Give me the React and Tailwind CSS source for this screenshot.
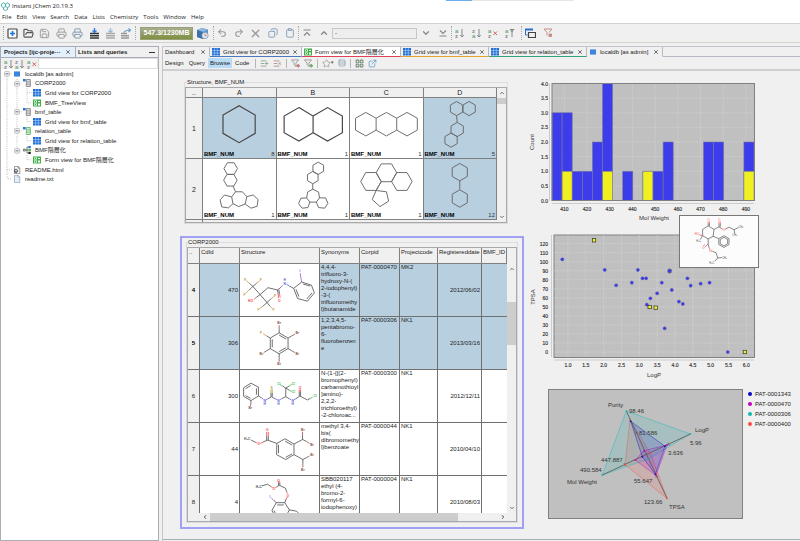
import React, { Component } from 'react';
import {
	SquarePlus, FolderOpen, Save, Printer, Undo2, Redo2, X, Copy, Clipboard, ChevronUp, ChevronDown,
	ChevronLeft, ChevronRight, Star, ListPlus, ListX, ExternalLink, LayoutGrid, Rows3
} from 'lucide-react';

const C = '#4a4a4a';
const RED = '#f04040';
const BLUE = '#5a5ae0';
const GOLD = '#c39a45';
const BROWN = '#8a4a4a';
const GREEN = '#35b94a';
const PURPLE = '#a050d0';

const ring = (cx, cy, r, turn = 30) => {
	let d = '';
	for (let i = 0; i < 6; i++) {
		const a = ((i * 60 + turn) * Math.PI) / 180;
		d += `${i ? 'L' : 'M'}${(cx + r * Math.cos(a)).toFixed(1)} ${(cy + r * Math.sin(a)).toFixed(1)}`;
	}
	return d + 'Z';
};

const scaffolds = [
	[
		{ count: 8, selected: true, bold: true, d: 'M109 21L159 50V107L109 136L59 107V50Z' },
		{ count: 1, bold: true, d: 'M65 27L109 53V105L65 131L19 105V53ZM109 53L154 27L200 53V105L154 131L109 105' },
		{
			count: 1,
			d: 'M46 42L78 60V97L46 115L14 97V60ZM78 60L110 42L142 60V97L110 115L78 97M142 60L174 42L206 60V97L174 115L142 97'
		},
		{ count: 5, selected: true, d: ring(98, 30, 22) + ring(137, 30, 22) + 'M98 52L100 73' + ring(100, 95, 22) + ring(81, 128, 22) }
	],
	[
		{
			count: 1,
			d:
				ring(83, 27, 21, 0) + ring(82, 63, 21, 0) +
				'M90 81L98 99L119 99L133 114L128 137L108 145L90 136L86 115L98 99' +
				'M86 115L64 109L50 124L55 146L76 149L90 136M133 114L153 109L168 123L165 144L146 150L128 137'
		},
		{
			count: 1,
			d:
				ring(125, 26, 19) + ring(108, 55, 19) +
				'M108 74V91L126 100L129 118L119 131H99L89 118L92 100L108 91' +
				'M89 118L71 119L64 136L75 150L93 148L99 131M129 118H148L155 135L145 150L126 148L119 131'
		},
		{
			count: 1,
			d: ring(110, 40, 32, 0) + ring(62, 67, 32, 0) + ring(158, 67, 32, 0) + 'M94 67L78 95L110 99L117 128L90 145L66 123L78 95'
		},
		{ count: 12, selected: true, d: ring(108, 38, 27) + 'M108 65V92' + ring(108, 120, 27) }
	]
];

const compounds = [
	{
		row: 4, id: 470, corpid: 'PAT-0000470', project: 'MK2', date: '2012/06/02', selected: true,
		synonyms: ['4,4,4-', 'trifluoro-3-', 'hydroxy-N-(', '2-iodophenyl)', '-3-(', 'trifluoromethy', 'l)butanamide'],
		bonds: [
			[C, 'M187 54L217 63L226 87L205 112L175 104L163 73ZM192 60L213 66M219 87L203 105M179 98L170 76M163 73L150 66M124 70L114 78L85 71L61 92L39 67M61 92L82 116M61 92L50 100M114 78L116 90M118 77L120 89M39 67L51 57M39 67L28 57M39 67L27 79M82 116L94 105M82 116L70 127M82 116L91 127'],
			[GOLD, 'M51 57L60 50M28 57L19 49M27 79L17 88M94 105L103 98M70 127L60 134M91 127L98 134'],
			[RED, 'M50 100L42 107M116 90L117 102M120 89L122 101'],
			[BLUE, 'M150 66L142 61M130 64L124 70'],
			[PURPLE, 'M187 54L183 27']
		],
		atoms: [
			['I', 182, 20, PURPLE], ['H', 136, 47, BLUE], ['N', 136, 59, BLUE], ['O', 119, 112, RED], ['HO', 32, 112, RED],
			['F', 16, 46, GOLD], ['F', 63, 46, GOLD], ['F', 14, 91, GOLD], ['F', 106, 94, GOLD], ['F', 56, 138, GOLD], ['F', 102, 138, GOLD]
		]
	},
	{
		row: 5, id: 306, corpid: 'PAT-0000306', project: 'NK1', date: '2013/03/16', selected: true,
		synonyms: ['1,2,3,4,5-', 'pentabromo-', '6-', 'fluorobenzen', 'e'],
		bonds: [
			[C, 'M119 47L146 63V95L119 111L92 95V63ZM119 54L140 66M140 92L119 104M98 91V67M119 47V36M146 63L156 57M146 95L156 101M119 111V123M92 95L82 101M92 63L82 57'],
			[BROWN, 'M119 36V24M156 57L167 51M156 101L167 107M119 123V135M82 101L72 107'],
			[GOLD, 'M82 57L70 50']
		],
		atoms: [
			['Br', 119, 17, BROWN], ['Br', 174, 48, BROWN], ['Br', 174, 111, BROWN], ['Br', 119, 142, BROWN],
			['Br', 65, 111, BROWN], ['F', 64, 47, GOLD]
		]
	},
	{
		row: 6, id: 300, corpid: 'PAT-0000300', project: 'NK1', date: '2012/12/11',
		synonyms: ['N-(1-{[(2-', 'bromophenyl)', 'carbamothioyl', ']amino}-', '2,2,2-', 'trichloroethyl)', '-2-chloroac...'],
		bonds: [
			[C, 'M11 53L33 39L56 51V78L33 92L11 79ZM17 56L33 46M50 55V74M32 85L17 77M56 78L66 84M84 87L96 80M96 80L106 86M94 80V68M98 80V68M127 86L139 80V54M139 80L149 86M139 54L130 48M139 54L149 48M139 54L149 60M170 86L182 78M180 78V66M184 78V66M182 78L205 90L214 85M33 92V100'],
			[BROWN, 'M33 100L32 108'],
			[BLUE, 'M66 84L71 88M79 90L84 87M106 86L112 89M122 89L127 86M149 86L155 89M164 89L170 86'],
			['#a3a335', 'M94 68V58M98 68V58'],
			[RED, 'M180 66V58M184 66V58'],
			[GREEN, 'M130 48L122 44M149 48L157 43M149 60L157 64M214 85L221 81']
		],
		atoms: [
			['Br', 31, 115, BROWN], ['N', 75, 92, BLUE], ['H', 75, 101, BLUE], ['S', 96, 52, '#a3a335'], ['N', 117, 92, BLUE],
			['H', 117, 101, BLUE], ['N', 160, 92, BLUE], ['H', 160, 101, BLUE], ['Cl', 118, 41, GREEN], ['Cl', 162, 41, GREEN],
			['Cl', 162, 66, GREEN], ['O', 182, 53, RED], ['Cl', 228, 78, GREEN]
		]
	},
	{
		row: 7, id: 44, corpid: 'PAT-0000044', project: 'NK1', date: '2010/04/10',
		synonyms: ['methyl 3,4-', 'bis(', 'dibromomethy', 'l)benzoate'],
		bonds: [
			[C, 'M112 61L137 47L164 63V95L139 110L111 95ZM137 54L158 66M158 93L139 103M117 91V65M112 61L83 51L70 57M81 51V38M86 51V38M34 51L48 58M164 63L190 49V36M190 49L202 55M164 95L191 110V123M191 110L203 104'],
			[RED, 'M70 57L62 61M81 38V26M86 38V26M48 58L52 60'],
			[BROWN, 'M190 36V26M202 55L211 61M191 123V134M203 104L211 99']
		],
		atoms: [
			['H₃C', 22, 48, C], ['O', 57, 63, RED], ['O', 83, 18, RED], ['Br', 191, 18, BROWN], ['Br', 219, 64, BROWN],
			['Br', 219, 96, BROWN], ['Br', 191, 142, BROWN]
		]
	},
	{
		row: 8, id: 4, corpid: 'PAT-0000004', project: 'NK1', date: '2010/08/03',
		synonyms: ['SBB020117', 'ethyl (4-', 'bromo-2-', 'formyl-6-', 'iodophenoxy)'],
		bonds: [
			[C, 'M67 29L84 24L94 31M110 33L119 27L138 36L142 47M117 27V20M121 27V20M140 69L136 80L110 80L97 104L110 128H136L150 102L136 80M133 87H113M103 104L113 122M150 102L172 106L178 112M110 80L101 71'],
			[RED, 'M94 31L99 34M107 35L110 33M117 20L116 16M121 20L120 16M142 47L144 52M144 63L140 69'],
			[PURPLE, 'M101 71L95 66']
		],
		atoms: [['H₃C', 57, 30, C], ['O', 103, 38, RED], ['O', 117, 12, RED], ['O', 145, 58, RED], ['I', 91, 63, PURPLE]]
	}
];

const hoverMolecule = {
	bonds: [
		[C, 'M86 30L104 41L101 62L86 70L69 60V41ZM101 62L118 69M104 41L119 33L128 39M119 33V24M123 33V24M86 30V22M90 30V22M140 39L150 34L165 42L178 35M165 42L167 53M69 60L63 70M86 70V86L80 91M86 86L89 97M110 112L115 128L128 127M115 128L106 138M100 108L110 112'],
		[C, ring(134, 78, 18) + ring(134, 78, 13)],
		[RED, 'M119 24V17M123 24V17M86 22V17M90 22V17M128 39L131 41M137 41L140 39M69 60L58 57M80 91L75 95M76 87L71 91M89 97L91 102M94 106L100 108']
	],
	atoms: [
		['O', 87, 12, RED], ['O', 120, 12, RED], ['O', 134, 43, RED], ['HO', 51, 54, RED], ['CH₃', 186, 32, C], ['CH₃', 167, 58, C],
		['H₃C', 57, 75, C], ['O', 71, 97, RED], ['O', 92, 106, RED], ['CH₃', 136, 126, C], ['H₃C', 97, 142, C]
	]
};

function Molecule({ bonds, atoms, viewBox, className, small }) {
	return (
		<svg className={className} viewBox={viewBox} fill="none" strokeWidth={small ? 2 : 2.4}>
			{bonds.map(([color, d], i) => <path key={i} d={d} stroke={color} />)}
			{atoms.map(([label, x, y, color], i) => (
				<text
					key={i} x={x} y={y + 4} fontSize={small ? 8 : 10} fontWeight={small ? 'normal' : 'bold'}
					textAnchor="middle" fill={color}
				>
					{label}
				</text>
			))}
		</svg>
	);
}

const GridIcon = () => (
	<svg className="h-2 w-2 shrink-0" viewBox="0 0 8 8">
		<path fill="#1f6fd6" d="M0 0h8v7.5H0z" />
		<path stroke="#cfe2fa" strokeWidth=".5" d="M2.6 0v8M5.3 0v8M0 2.5h8M0 5h8" />
	</svg>
);
const FormIcon = () => (
	<svg className="h-2 w-2 shrink-0" viewBox="0 0 8 8">
		<path fill="#3fae49" d="M0 .5h8v7H0z" />
		<path fill="#fff" d="M1 1.5h3v2H1zM1 4.5h3v2H1zM5 2h2v1H5zM5 4.5h2v2H5z" />
		<path fill="#3fae49" d="M1.7 2h1.5v1H1.7zM1.7 5h1.5v1H1.7z" />
	</svg>
);
const DbIcon = () => (
	<svg className="h-2 w-2 shrink-0" viewBox="0 0 8 8">
		<path fill="#1f73d8" d="M1 1.5h6v5H1z" />
		<path stroke="#8fc0f5" strokeWidth=".5" d="M1 3h6M1 5h6" />
	</svg>
);
const TableIcon = ({ color }) => (
	<svg className="h-2 w-2 shrink-0" viewBox="0 0 8 8" fill="none">
		<path fill="#1f73d8" d="M0 0h2.6v2.4H0z" />
		<path stroke={color} strokeWidth=".8" d="M3.3.5h4v7h-4zM3.3 2.2h4M3.3 4h4M3.3 5.8h4" />
	</svg>
);
const TreeIcon = () => (
	<svg className="h-2 w-2 shrink-0" viewBox="0 0 8 8" fill="none">
		<path stroke="#444" strokeWidth=".7" d="M2 4h3M4 1v6M4 1h1.5M4 7h1.5M.4 3h1.7v2H.4z" />
		<path fill="#1f73d8" d="M5.4 0h2.4v2.2H5.4z" />
		<path fill="#3fae49" d="M5.4 2.9h2.4v2.2H5.4z" />
		<path fill="#222" d="M5.4 5.8h2.4V8H5.4z" />
	</svg>
);
const PageIcon = ({ web }) => (
	<svg className="h-2 w-2 shrink-0" viewBox="0 0 8 8" fill="none" strokeWidth=".6">
		<path stroke={web ? '#555' : '#7f93b5'} fill={web ? '#fff' : '#e3edf8'} d="M1.5.4h3.7l1.6 1.7v5.5H1.5zM5 .4v1.8h1.8" />
		{web && <path stroke="#333" fill="#fff" strokeWidth=".8" d="M3 3.2a1.7 1.7 0 1 0 .1 0M1.3 5.2h3.4" />}
	</svg>
);

const icons = { grid: GridIcon, form: FormIcon, db: DbIcon };

const Sort = ({ top = 'a', bottom = 'z', mark = 'arrow' }) => (
	<svg className="h-[10px] w-[10px]" viewBox="0 0 10 10" fill="none">
		<text x="0" y="4.5" fontSize="6" fontWeight="bold" fill={top === 'a' ? '#6fa877' : '#888'}>{top}</text>
		<text x="0" y="9.5" fontSize="6" fontWeight="bold" fill={bottom === 'a' ? '#6fa877' : '#888'}>{bottom}</text>
		{mark === 'arrow' && <path stroke="#888" d="M7 1v8M5.2 7L7 9l1.800-2" />}
		{mark === 'x' && <path stroke="#c66" d="M5.500 3.500l3.500 3.500M9 3.500L5.500 7" />}
		{mark === 'filter' && <path stroke="#888" d="M4.800 1.500h4.500M7 2v7M5.500 1.500L7 4l1.500-2.500" />}
	</svg>
);

const FilterMark = ({ color, mark }) => (
	<svg className="h-[9px] w-[9px]" viewBox="0 0 10 10" fill="none">
		<path stroke={color} d="M.5 1h8L5.500 4.500V8.500L3.500 6.500v-2z" />
		<path stroke={mark} strokeWidth="1.600" d="M6 7.500h4M8 5.500v4" />
	</svg>
);

const Stack = ({ kind }) => (
	<svg className="h-[11px] w-[11px]" viewBox="0 0 11 11" fill="none">
		{kind === 'share' ? (
			<g>
				<path stroke="#999" strokeWidth="1.500" d="M0 5.500h6M0 7.700h8M0 10h8" />
				<path stroke="#6e9cc4" strokeWidth="1.200" d="M3 4.500C4 2.500 6 2 9 2M7.500.500L9.500 2 7.500 4" />
			</g>
		) : (
			<g>
				<path stroke={kind === 'down' ? '#333' : '#aaa'} strokeWidth="1.500" d="M1 5.500h9M1 7.700h9M1 10h9" />
				<path stroke={kind === 'down' ? '#2b78d8' : '#9bbbd8'} strokeWidth="1.300" d="M5.500 0v4M3.500 2.500l2 2 2-2" />
			</g>
		)}
	</svg>
);

const Grip = () => <span className="h-3.5 w-px border-l border-dotted border-[#aaa]" />;
const Rule = () => <span className="h-[9px] w-px bg-[#b5b5b5]" />;

const IconButton = ({ label, children }) => (
	<button type="button" aria-label={label} className="flex h-3.5 items-center justify-center text-[#999]">{children}</button>
);

// guides: one letter per indent step - v line, t tee, l elbow, x expander, e last expander, r root expander
const tree = [
	{ guides: 'r', icon: <DbIcon />, label: 'localdb [as admin]' },
	{ guides: 'vx', icon: <TableIcon color="#777" />, label: 'CORP2000' },
	{ guides: 'vvt', icon: <GridIcon />, label: 'Grid view for CORP2000' },
	{ guides: 'vvl', icon: <FormIcon />, label: 'BMF_TreeView' },
	{ guides: 'vx', icon: <TableIcon color="#777" />, label: 'bmf_table' },
	{ guides: 'vvl', icon: <GridIcon />, label: 'Grid view for bmf_table' },
	{ guides: 'vx', icon: <TableIcon color="#4fae58" />, label: 'relation_table' },
	{ guides: 'vvl', icon: <GridIcon />, label: 'Grid view for relation_table' },
	{ guides: 've', icon: <TreeIcon />, label: 'BMF階層化' },
	{ guides: 'v l', icon: <FormIcon />, label: 'Form view for BMF階層化' },
	{ guides: 't', icon: <PageIcon web />, label: 'README.html' },
	{ guides: 'l', icon: <PageIcon />, label: 'readme.txt' }
];

const guidePaths = {
	v: 'M5 0V10', t: 'M5 0V10M5 5H10', l: 'M5 0V5H10', x: 'M5 0V10M5 5H10', e: 'M5 0V5H10', r: 'M5 5V10M5 5H10', ' ': ''
};

const Guide = ({ type }) => (
	<svg className="h-full w-[10px] shrink-0" viewBox="0 0 10 10" fill="none">
		<path d={guidePaths[type]} stroke="#aaa" strokeWidth=".7" strokeDasharray="1 1" />
		{'xer'.includes(type) && (
			<g>
				<rect x="2.5" y="2.5" width="5" height="5" rx=".8" fill="#f4f4f4" stroke="#999" strokeWidth=".6" />
				<path d="M3.500 5h3" stroke="#446" strokeWidth=".8" />
			</g>
		)}
	</svg>
);

const tabs = [
	{ label: 'Dashboard', width: 'w-[47px]', line: 'border-b-transparent' },
	{ label: 'Grid view for CORP2000', icon: 'grid', width: 'w-[92px]', line: 'border-b-[#4a78c0]' },
	{ label: 'Form view for BMF階層化', icon: 'form', width: 'w-[99px]', line: 'border-b-[#e0405a]', active: true },
	{ label: 'Grid view for bmf_table', icon: 'grid', width: 'w-[88px]', line: 'border-b-[#e5a52e]' },
	{ label: 'Grid view for relation_table', icon: 'grid', width: 'w-[98px]', line: 'border-b-[#35a080]' },
	{ label: 'localdb [as admin]', icon: 'db', width: 'w-[76px]', line: 'border-b-transparent' }
];

function Header() {
	return (
		<header className="relative bg-white [font-family:'Open_Sans','Noto_Sans',sans-serif]">
			<div className="absolute inset-x-0 top-0 flex justify-center pl-[220px]">
				<span className="h-px w-[26px] bg-[#6ab0f0]" />
				<span className="h-px w-[102px] bg-[#e6e6e6]" />
			</div>
			<div className="flex h-3 items-center gap-[2px] pl-px">
				<svg className="h-[9px] w-[9px]" viewBox="0 0 9 9" fill="none" stroke="#3aa9a4" strokeWidth=".9">
					<path d="M2.500.8L4.500 2v2.500L2.500 5.700.6 4.500V2zM4.500 2L6.500.8 8.400 2v2.500L6.500 5.700M4.500 4.500L6.500 5.700V7.500L4.500 8.500 2.500 7.500V5.700" />
				</svg>
				<h1 className="text-[6px]">Instant JChem 20.19.3</h1>
			</div>
			<nav className="flex h-[11px] items-center gap-[5px] pl-[2px] text-[6px]">
				{['File', 'Edit', 'View', 'Search', 'Data', 'Lists', 'Chemistry', 'Tools', 'Window', 'Help'].map((item) => (
					<button key={item} type="button">{item}</button>
				))}
			</nav>
		</header>
	);
}

function Toolbar() {
	return (
		<div className="flex h-5 items-center border-y border-[#d2d2d2] pl-[3px]">
			<Grip />
			<div className="grid w-[131px] grid-cols-8">
				<IconButton label="New">
					<svg className="h-[11px] w-[11px]" viewBox="0 0 11 11" fill="none">
						<rect x="1" y="1" width="9" height="9" rx=".8" fill="#fff" stroke="#444" strokeWidth="1.200" />
						<path stroke="#1f73d8" strokeWidth="1.700" d="M5.500 3v5M3 5.500h5" />
					</svg>
				</IconButton>
				<IconButton label="Open"><FolderOpen className="h-[11px] w-[11px] text-[#555]" strokeWidth={2.5} /></IconButton>
				<IconButton label="Save"><Save className="h-[11px] w-[11px]" /></IconButton>
				<IconButton label="Print"><Printer className="h-[11px] w-[11px]" /></IconButton>
				<IconButton label="Print preview"><Printer className="h-[11px] w-[11px] text-[#7c97ad]" /></IconButton>
				<IconButton label="Import"><Stack kind="down" /></IconButton>
				<IconButton label="Export"><Stack kind="up" /></IconButton>
				<IconButton label="Share"><Stack kind="share" /></IconButton>
			</div>
			<Grip />
			<div className="ml-1 flex h-[13px] w-[53px] items-center justify-center border border-[#9aa07a] bg-linear-to-b from-[#a9ad8c] via-[#8f9a66] to-[#7f9140] text-[7px] font-bold text-white">
				547.3/1230MB
			</div>
			<button type="button" aria-label="Database" className="ml-[3px]">
				<svg className="h-[13px] w-[13px]" viewBox="0 0 13 13">
					<path fill="#5b93c8" d="M1 3l5-2 6 1.500v7L7 12 1 10z" />
					<path fill="#8bb9e2" d="M1 3l5-2 6 1.500L7 5z" />
					<path fill="#3c72a8" d="M1 3l6 2v7l-6-2z" />
					<circle cx="9" cy="8.500" r="3.200" fill="#dce9f5" stroke="#7b8fa5" strokeWidth=".7" />
					<path d="M9 6.800v1.900h1.600" stroke="#c55" fill="none" strokeWidth=".7" />
				</svg>
			</button>
			<span className="w-1" />
			<Grip />
			<div className="grid w-[84px] grid-cols-5">
				<IconButton label="Undo"><Undo2 className="h-[10px] w-[10px]" strokeWidth={2.5} /></IconButton>
				<IconButton label="Redo"><Redo2 className="h-[10px] w-[10px]" strokeWidth={2.5} /></IconButton>
				<IconButton label="Cut"><X className="h-[13px] w-[13px]" strokeWidth={2.5} /></IconButton>
				<IconButton label="Copy"><Copy className="h-[10px] w-[10px] -scale-x-100 text-[#7695b5]" /></IconButton>
				<IconButton label="Paste"><Clipboard className="h-[10px] w-[10px] text-[#7695b5]" /></IconButton>
			</div>
			<Grip />
			<div className="grid w-[33px] grid-cols-2">
				<IconButton label="First">
					<svg className="h-[8px] w-[8px]" viewBox="0 0 8 8" fill="none" stroke="#888" strokeWidth="1.200"><path d="M.5 1h7M1 6.500l3-3 3 3" /></svg>
				</IconButton>
				<IconButton label="Previous"><ChevronUp className="h-[10px] w-[10px] text-[#888]" strokeWidth={3} /></IconButton>
			</div>
			<input aria-label="Record" defaultValue="-" className="h-[11px] w-[85px] border border-[#c8c8c8] bg-[#eee] px-[2px] text-[6px] outline-none" />
			<div className="grid w-[34px] grid-cols-2">
				<IconButton label="Next"><ChevronDown className="h-[10px] w-[10px] text-[#888]" strokeWidth={3} /></IconButton>
				<IconButton label="Last">
					<svg className="h-[8px] w-[8px]" viewBox="0 0 8 8" fill="none" stroke="#888" strokeWidth="1.200"><path d="M.5 7h7M1 1.500l3 3 3-3" /></svg>
				</IconButton>
			</div>
			<Grip />
			<div className="grid w-[66px] grid-cols-4">
				<IconButton label="Sort ascending"><Sort /></IconButton>
				<IconButton label="Sort descending"><Sort top="z" bottom="a" /></IconButton>
				<IconButton label="Clear sort"><Sort mark="x" /></IconButton>
				<IconButton label="Sort options"><Sort mark="filter" /></IconButton>
			</div>
			<span className="w-[3px]" />
			<Grip />
			<div className="grid w-[34px] grid-cols-2">
				<IconButton label="Windows">
					<svg className="h-[11px] w-[11px]" viewBox="0 0 11 11" fill="none">
						<path stroke="#2472cc" strokeWidth="2" d="M0 1.500h8" />
						<path stroke="#2472cc" d="M.5 1v6h2" />
						<path stroke="#444" fill="#f0f0f0" strokeWidth="1.200" d="M3.500 4.500h7v5h-7z" />
					</svg>
				</IconButton>
				<IconButton label="Clear filter">
					<svg className="h-[10px] w-[10px]" viewBox="0 0 10 10" fill="none" stroke="#c48f8a">
						<path d="M1 1h8L6 4.500M1 1l3 3.500v3" />
						<path fill="#c48f8a" d="M6 6h2.500v2.500H6z" />
					</svg>
				</IconButton>
			</div>
		</div>
	);
}

function ProjectPanel() {
	return (
		<aside className="flex w-[159px] shrink-0 flex-col border border-[#a9adb8] bg-white">
			<div className="flex h-[11px] items-center border-b border-[#a9adb8] bg-[#f0f0f0] text-[6px] font-bold whitespace-nowrap">
				<button type="button" className="flex h-full w-[74px] items-center justify-between bg-[#e4f0fb] pr-[4px] pl-[3px]">
					Projects [ijc-proje···
					<X className="h-[6px] w-[6px] text-[#444]" strokeWidth={3} />
				</button>
				<button type="button" className="h-full flex-1 border-l border-[#a9adb8] pl-[2px] text-left">Lists and queries</button>
				<button type="button" aria-label="Minimize" className="mr-[3px] h-px w-[6px] bg-[#333]" />
			</div>
			<div className="flex h-[11px] items-center bg-[#f0f0f0] pl-[3px]">
				<div className="grid w-[34px] shrink-0 grid-cols-3">
					<button type="button" aria-label="Sort A to Z"><Sort /></button>
					<button type="button" aria-label="Sort Z to A"><Sort top="z" bottom="a" /></button>
					<button type="button" aria-label="No sorting"><Sort mark="x" /></button>
				</div>
				<input aria-label="Filter projects" className="h-full min-w-0 flex-1 border border-[#ddd] bg-white px-1 text-[6px] outline-none" />
			</div>
			<ul className="grid h-[115px] grid-rows-12 pl-px text-[6px] leading-none">
				{tree.map(({ guides, icon, label }) => (
					<li key={label} className="flex min-h-0 items-center whitespace-nowrap">
						{guides.split('').map((type, i) => <Guide key={i} type={type} />)}
						<span className="mr-[4px] ml-px">{icon}</span>
						{label}
					</li>
				))}
			</ul>
		</aside>
	);
}

function ScrollBar({ thumb }) {
	return (
		<div className="flex w-[9px] shrink-0 flex-col items-center justify-between bg-[#f0f0f0] py-[2px]">
			<ChevronUp className="h-[6px] w-[6px] text-[#444]" strokeWidth={3} />
			<div className="flex w-full flex-1 flex-col">{thumb}</div>
			<ChevronDown className="h-[6px] w-[6px] text-[#444]" strokeWidth={3} />
		</div>
	);
}

const head = 'border-r border-b border-[#808080] bg-[#f0f0f0] font-normal';

function ScaffoldTable() {
	return (
		<fieldset className="mr-[16px] ml-[4px] min-w-0 border border-[#dcdcdc]">
			<legend className="ml-[2px] h-2 text-[6px] leading-[8px]">Structure, BMF_NUM</legend>
			<div className="mt-px flex h-[136px] overflow-hidden border border-[#a8a8a8] bg-white">
				<table className="h-min w-full table-fixed border-separate border-spacing-0 text-[7px] leading-[7px]">
					<colgroup><col className="w-[17px]" /><col /><col /><col /><col /></colgroup>
					<thead>
						<tr className="h-[10px]">
							<th className={head}>..</th>
							{['A', 'B', 'C', 'D'].map((name) => <th key={name} className={head}>{name}</th>)}
						</tr>
					</thead>
					<tbody>
						{scaffolds.map((row, i) => (
							<tr key={i}>
								<th className={head}>{i + 1}</th>
								{row.map(({ d, count, selected, bold }, j) => (
									<td key={j} className={`border-r border-b border-[#808080] px-px ${selected ? 'bg-[#b8cfe0]' : 'bg-white'}`}>
										<svg className="h-[53px] w-full" viewBox="0 0 219 159" fill="none" stroke={bold ? '#444' : '#6a6a6a'} strokeWidth={bold ? 3.6 : 3}>
											<path d={d} />
										</svg>
										<div className="flex justify-between text-[6px]">
											<b className="text-black">BMF_NUM</b>
											<span className="text-[#333]">{count}</span>
										</div>
									</td>
								))}
							</tr>
						))}
						<tr className="h-[4px]">
							<th className={head} />
							<td colSpan={4} className="bg-[#f0f0f0]" />
						</tr>
					</tbody>
				</table>
				<ScrollBar thumb={<span className="mt-[2px] h-[6px] w-full bg-[#cdcdcd]" />} />
			</div>
		</fieldset>
	);
}

function CompoundTable() {
	const cell = 'border-r border-b border-[#707070] px-px align-top overflow-hidden';
	return (
		<div className="mt-[12px] border-2 border-[#a0a0f4] px-[4px] pb-[4px]">
			<fieldset className="min-w-0 border border-[#dcdcdc]">
				<legend className="ml-px h-2 text-[6px] leading-[8px]">CORP2000</legend>
				<div className="mt-px border border-[#a8a8a8] bg-white">
					<div className="flex h-[265px] overflow-hidden">
						<table className="h-min w-full table-fixed border-separate border-spacing-0 text-[6px] leading-[7px]">
							<colgroup>
								<col className="w-[12px]" /><col className="w-[40px]" /><col className="w-[80px]" /><col className="w-[40px]" />
								<col className="w-[40px]" /><col className="w-[38px]" /><col className="w-[44px]" /><col />
							</colgroup>
							<thead>
								<tr className="h-[16px] text-left align-top">
									{['..', 'CdId', 'Structure', 'Synonyms', 'Corpid', 'Projectcode', 'Registereddate', 'BMF_ID'].map((name) => (
										<th key={name} className={`${head} px-px pt-px whitespace-nowrap`}>{name}</th>
									))}
								</tr>
							</thead>
							<tbody>
								{compounds.map((item) => (
									<tr key={item.row} className={`h-[53px] ${item.selected ? 'bg-[#b8cfe0]' : 'bg-white'}`}>
										<th className={`border-r border-b border-[#707070] bg-[#f0f0f0] ${item.selected ? 'font-bold text-black' : 'font-normal'}`}>{item.row}</th>
										<td className="border-r border-b border-[#707070] px-px text-right">{item.id}</td>
										<td className="border-r border-b border-[#707070] bg-white">
											<Molecule bonds={item.bonds} atoms={item.atoms} viewBox="0 0 240 156" className="h-[52px] w-full" />
										</td>
										<td className={`${cell} whitespace-nowrap`}>
											{item.synonyms.map((line) => <div key={line}>{line}</div>)}
										</td>
										<td className={`${cell} whitespace-nowrap`}>{item.corpid}</td>
										<td className={cell}>{item.project}</td>
										<td className="border-r border-b border-[#707070] px-px text-right">{item.date}</td>
										<td className="border-b border-[#707070]" />
									</tr>
								))}
							</tbody>
						</table>
						<div className="flex bg-[#f0f0f0] pt-[16px]">
							<ScrollBar thumb={<span className="mt-[30px] h-[43px] w-full bg-[#cdcdcd]" />} />
						</div>
					</div>
					<div className="flex h-[8px] items-center bg-[#f0f0f0] pr-[10px] pl-[14px]">
						<ChevronLeft className="h-[6px] w-[6px]" strokeWidth={3} />
						<span className="flex h-full flex-1 px-[2px]"><span className="h-full w-[86%] bg-[#cdcdcd]" /></span>
						<ChevronRight className="h-[6px] w-[6px]" strokeWidth={3} />
					</div>
				</div>
			</fieldset>
		</div>
	);
}

// [bar height, part of it that is selected]
const bins = [
	[3, 0], [3, 1], [1, 0], [1, 0], [2, 0], [4, 1], [0, 0], [1, 0], [0, 0], [1, 1],
	[1, 0], [2, 0], [0, 0], [0, 0], [0, 0], [2, 0], [2, 0], [0, 0], [0, 0], [2, 1]
];

function Histogram() {
	const bw = 202 / 20;
	const y = (v) => 125.5 - v * 29.25;
	const x = (v) => 40.3 + (v - 410) * 2.27;
	const counts = [0, 0.5, 1, 1.5, 2, 2.5, 3, 3.5, 4];
	const weights = [410, 420, 430, 440, 450, 460, 470, 480, 490];
	return (
		<svg className="block w-full" viewBox="0 0 276 150" role="img" aria-label="Count by Mol Weight" fill="#333">
			<rect x="28" y="8.5" width="202.5" height="117" fill="#c0c0c0" />
			<path
				d={counts.map((v) => `M28 ${y(v)}H230`).join('') + weights.map((v) => `M${x(v)} 8.5V125.5`).join('')}
				stroke="#d4d4d4" strokeWidth=".6" strokeDasharray="2 1"
			/>
			{bins.map(([total, picked], i) => (
				<g key={i} stroke="#7777a0" strokeWidth=".6">
					{total > 0 && <rect x={28 + i * bw} y={y(total)} width={bw} height={total * 29.25} fill="#3c3cea" />}
					{picked > 0 && <rect x={28 + i * bw} y={y(picked)} width={bw} height={picked * 29.25} fill="#f0f020" />}
				</g>
			))}
			<rect x="28" y="8.5" width="202.5" height="117" fill="none" stroke="#808080" />
			<path d="M25.5 8.500V125.500M28 128.500H230" stroke="#bbb" strokeWidth=".7" />
			<g fontSize="5" stroke="#333" strokeWidth=".15">
				{counts.map((v) => <text key={v} x="24" y={y(v) + 2} textAnchor="end">{v.toFixed(1)}</text>)}
				{weights.map((v) => <text key={v} x={x(v)} y="136" textAnchor="middle">{v}</text>)}
			</g>
			<text x="130" y="145" fontSize="6" textAnchor="middle">Mol Weight</text>
			<text transform="translate(10 67) rotate(-90)" fontSize="6" textAnchor="middle">Count</text>
		</svg>
	);
}

const points = [
	[0.84, 102.6], [2.03, 90.9], [2.96, 90.9], [2.35, 73.9], [2.79, 76.8], [3.09, 81.6], [3.19, 81.6], [3.63, 76.8],
	[4.35, 81.6], [4.44, 73.5], [4.72, 75.7], [4.97, 76.8], [3.91, 68.7], [3.5, 65], [3.31, 59.4], [4.11, 55.8],
	[4.22, 53.2], [3.21, 52.4], [3.71, 26.2], [5.48, 0]
];
const pickedPoints = [[1.73, 123.7], [3.29, 49.8], [3.46, 49.1], [5.96, 0]];

function ScatterPlot() {
	const x = (v) => 44 + (v - 1) * 35.66;
	const y = (v) => 127 - v * 0.903;
	const logp = [1, 1.5, 2, 2.5, 3, 3.5, 4, 4.5, 5, 5.5, 6];
	const tpsa = [0, 10, 20, 30, 40, 50, 60, 70, 80, 90, 100, 110, 120];
	return (
		<div className="relative">
			<svg className="block w-full" viewBox="0 0 276 155" role="img" aria-label="TPSA by LogP" fill="#333">
				<rect x="30" y="10" width="200.500" height="122.500" fill="#c0c0c0" stroke="#808080" />
				<path
					d={tpsa.map((v) => `M30 ${y(v)}H230`).join('') + logp.map((v) => `M${x(v)} 10V132`).join('')}
					stroke="#d4d4d4" strokeWidth=".6" strokeDasharray="2 1"
				/>
				{points.map(([a, b]) => <circle key={`${a} ${b}`} cx={x(a)} cy={y(b)} r="1.600" fill="#3c3cea" stroke="#5555a0" strokeWidth=".4" />)}
				<circle cx={x(3.85)} cy={y(89.7)} r="2.200" fill="#3c3cea" stroke="#8a8a50" strokeWidth=".6" />
				{pickedPoints.map(([a, b]) => (
					<rect key={a} x={x(a) - 1.7} y={y(b) - 1.7} width="3.400" height="3.400" fill="#f0f020" stroke="#333" strokeWidth=".7" />
				))}
				<path d="M27.500 10V132M30 135H230" stroke="#bbb" strokeWidth=".7" />
				<g fontSize="5" stroke="#333" strokeWidth=".15">
					{tpsa.map((v) => <text key={v} x="24" y={y(v) + 2} textAnchor="end">{v}</text>)}
					{logp.map((v) => <text key={v} x={x(v)} y="142" textAnchor="middle">{v.toFixed(1)}</text>)}
				</g>
				<text x="130" y="152" fontSize="6" textAnchor="middle">LogP</text>
				<text transform="translate(11 72) rotate(-90)" fontSize="6" textAnchor="middle">TPSA</text>
			</svg>
			<div className="absolute -top-[10px] left-[56%] w-[80px] border border-[#777] bg-[#fcfcfc]">
				<Molecule {...hoverMolecule} small viewBox="0 0 238 155" className="block w-full" />
			</div>
		</div>
	);
}

const radarLabels = [
	['Purity', 59, 17], ['98.46', 80, 23], ['81.586', 90, 45], ['LogP', 146, 42], ['5.96', 141, 55], ['3.636', 119, 65],
	['447.887', 52, 72], ['490.584', 31, 82], ['Mol Weight', 18, 94], ['55.647', 85, 93], ['123.66', 95, 114], ['TPSA', 120, 119]
];

const series = [
	{ label: 'PAT-0001343', color: '#0a0ac8', points: '81.7,31.3 116,56.3 106.300,84.300 93.300,66.700' },
	{ label: 'PAT-0000470', color: '#c000c0', points: '95,60.7 118,55 107,85.300 86.300,70' },
	{ label: 'PAT-0000306', color: '#10b8b8', points: '77.3,21 141.300,44 99.300,69 53.300,85' },
	{ label: 'PAT-0000400', color: '#ff4a40', points: '81,29.700 101.300,63 118,108.300 76,74.700' }
];

function RadarChart() {
	return (
		<div className="flex pl-[24px]">
			<svg className="block w-[195px] shrink-0 border border-[#808080] bg-[#c0c0c0]" viewBox="0 0 193 128" role="img" aria-label="Property comparison" fill="#333">
				{series.slice().reverse().map((s) => (
					<polygon key={s.label} points={s.points} fill={s.color} fillOpacity=".14" stroke={s.color} strokeOpacity=".6" strokeWidth=".7" />
				))}
				<path d="M77.300 21L118 108.300M141.300 44L53.300 85" stroke="#555" strokeWidth=".8" />
				<path d="M86 43.500l3-1.500M119 52.500l1.500 3M106.500 87.500l3-1.500M75 73l1.500 3" stroke="#555" strokeWidth=".7" />
				{series.map((s) => s.points.split(' ').map((p) => {
					const [cx, cy] = p.split(',');
					return <circle key={s.label + p} cx={cx} cy={cy} r="1" fill={s.color} fillOpacity=".8" />;
				}))}
				{radarLabels.map(([text, x, y]) => <text key={text} x={x} y={y} fontSize="6">{text}</text>)}
			</svg>
			<ul className="ml-[5px] text-[6px] leading-[10px]">
				{series.map((s) => (
					<li key={s.label} className="flex items-center gap-[3px] whitespace-nowrap">
						<span className="h-1 w-1 rounded-full" style={{ backgroundColor: s.color }} />
						{s.label}
					</li>
				))}
			</ul>
		</div>
	);
}

class App extends Component {
	state = {
		mode: 'Browse'
	};

	render() {
		return (
			<div className="flex min-h-screen flex-col bg-[#f0f0f0] text-[#222] [font-family:'Liberation_Sans','Noto_Sans_CJK_JP',sans-serif]">
				<Header />
				<Toolbar />
				<div className="flex flex-1 gap-[3px] pt-[3px]">
					<ProjectPanel />
					<main className="flex min-w-0 flex-1 flex-col border-t border-l border-[#c4c4cc]">
						<div className="flex h-[10px] border-b border-[#b8b8c4] text-[6px] leading-none">
							{tabs.map(({ label, icon, width, line, active }) => {
								const Icon = icons[icon];
								return (
									<button
										key={label}
										type="button"
										className={`flex h-[10px] items-center gap-[3px] border-r border-r-[#b8b8c4] border-b pr-[3px] pl-[2px] whitespace-nowrap ${width} ${line} ${active ? 'bg-white' : 'bg-[#f0f0f0]'}`}
									>
										{Icon && <Icon />}
										<span className="flex-1 text-left">{label}</span>
										<X className="h-[6px] w-[6px] shrink-0 text-[#444]" strokeWidth={3} />
									</button>
								);
							})}
						</div>
						<div className="flex h-[14px] items-center gap-[4px] border-b-2 border-[#cfcfd3] text-[6px]">
							<div className="flex gap-px">
								{['Design', 'Query', 'Browse', 'Code'].map((mode) => (
									<button
										key={mode}
										type="button"
										className={`h-[10px] px-[2px] ${this.state.mode === mode ? 'bg-[#b9dbf5]' : ''}`}
										onClick={() => this.setState({ mode })}
									>
										{mode}
									</button>
								))}
							</div>
							<Rule />
							<IconButton label="Add row"><ListPlus className="h-[9px] w-[9px] text-[#7a9a7c]" /></IconButton>
							<IconButton label="Delete row"><ListX className="h-[9px] w-[9px] text-[#a08080]" /></IconButton>
							<Rule />
							<IconButton label="Filter"><FilterMark color="#999" mark="#c77" /></IconButton>
							<IconButton label="Add filter"><FilterMark color="#999" mark="#6a6" /></IconButton>
							<Rule />
							<IconButton label="Favourites"><Star className="h-[9px] w-[9px]" /><span className="text-[5px] text-[#555]">▾</span></IconButton>
							<IconButton label="Rows"><Rows3 className="h-[8px] w-[8px] text-[#8499ae]" /></IconButton>
							<Rule />
							<IconButton label="Layout"><LayoutGrid className="h-[9px] w-[9px] text-[#7d8f7d]" strokeWidth={3} /></IconButton>
							<IconButton label="Open in window"><ExternalLink className="h-[9px] w-[9px] text-[#5d96cc]" /></IconButton>
						</div>
						<div className="grid flex-1 grid-cols-[344fr_276fr] pt-[4px] pl-[17px]">
							<div className="min-w-0 pt-[3px]">
								<ScaffoldTable />
								<CompoundTable />
							</div>
							<div className="min-w-0">
								<Histogram />
								<ScatterPlot />
								<div className="mt-[9px]"><RadarChart /></div>
							</div>
						</div>
						<div className="h-[2px] border-t border-[#a9adb8]" />
					</main>
				</div>
			</div>
		);
	}
}

export default App;
